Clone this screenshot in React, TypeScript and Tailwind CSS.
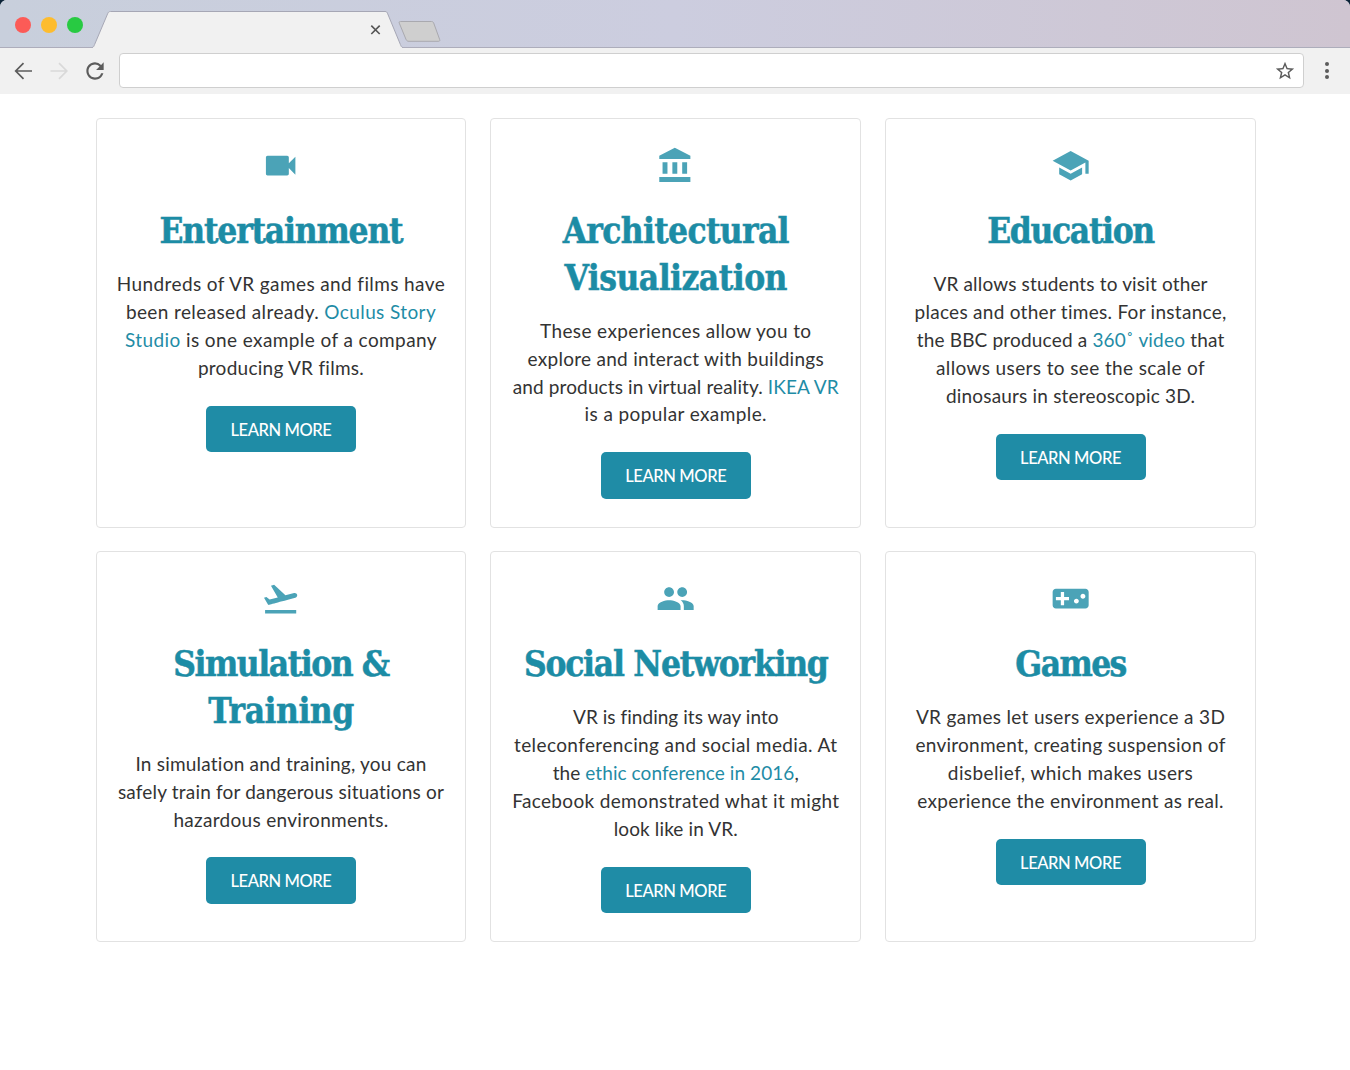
import { ReactNode } from "react";
import {
  MdFlightTakeoff,
  MdPeople,
  MdRefresh,
  MdSchool,
  MdStarBorder,
  MdVideocam,
  MdVideogameAsset,
} from "react-icons/md";

type Line = {
  content: ReactNode;
  tracking: string;
};

type Application = {
  id: string;
  icon: ReactNode;
  title: Line[];
  text: Line[];
};

const Link = ({ children }: { children: ReactNode }) => (
  <a href="#" className="text-[#1f8ca6]">
    {children}
  </a>
);

const BankIcon = () => (
  <svg viewBox="0 0 24 24" className="size-full" fill="currentColor">
    <path d="M4 10v7h3v-7H4zm6 0v7h3v-7h-3zM2 22h19v-3H2v3zm14-12v7h3v-7h-3zm-4.5-9L2 6v2h19V6l-9.5-5z" />
  </svg>
);

const applications: Application[] = [
  {
    id: "entertainment",
    icon: <MdVideocam className="size-full" />,
    title: [{ content: "Entertainment", tracking: "tracking-[-1.22px]" }],
    text: [
      { content: "Hundreds of VR games and films have", tracking: "tracking-[0.39px]" },
      {
        content: (
          <>
            been released already. <Link>Oculus Story</Link>
          </>
        ),
        tracking: "tracking-[0.39px]",
      },
      {
        content: (
          <>
            <Link>Studio</Link> is one example of a company
          </>
        ),
        tracking: "tracking-[0.41px]",
      },
      { content: "producing VR films.", tracking: "tracking-[0.26px]" },
    ],
  },
  {
    id: "architecture",
    icon: <BankIcon />,
    title: [
      { content: "Architectural", tracking: "tracking-[-0.69px]" },
      { content: "Visualization", tracking: "tracking-[-0.54px]" },
    ],
    text: [
      { content: "These experiences allow you to", tracking: "tracking-[0.37px]" },
      { content: "explore and interact with buildings", tracking: "tracking-[0.28px]" },
      {
        content: (
          <>
            and products in virtual reality. <Link>IKEA VR</Link>
          </>
        ),
        tracking: "tracking-[0.12px]",
      },
      { content: "is a popular example.", tracking: "tracking-[0.4px]" },
    ],
  },
  {
    id: "education",
    icon: <MdSchool className="size-full" />,
    title: [{ content: "Education", tracking: "tracking-[-1.36px]" }],
    text: [
      { content: "VR allows students to visit other", tracking: "tracking-[0.16px]" },
      { content: "places and other times. For instance,", tracking: "tracking-[0.28px]" },
      {
        content: (
          <>
            the BBC produced a <Link>360˚ video</Link> that
          </>
        ),
        tracking: "tracking-[0.18px]",
      },
      { content: "allows users to see the scale of", tracking: "tracking-[0.38px]" },
      { content: "dinosaurs in stereoscopic 3D.", tracking: "tracking-[0.19px]" },
    ],
  },
  {
    id: "simulation",
    icon: <MdFlightTakeoff className="size-full" />,
    title: [
      { content: "Simulation &", tracking: "tracking-[-1.46px]" },
      { content: "Training", tracking: "tracking-[-0.52px]" },
    ],
    text: [
      { content: "In simulation and training, you can", tracking: "tracking-[0.22px]" },
      { content: "safely train for dangerous situations or", tracking: "tracking-[0.19px]" },
      { content: "hazardous environments.", tracking: "tracking-[0.31px]" },
    ],
  },
  {
    id: "social",
    icon: <MdPeople className="size-full" />,
    title: [{ content: "Social Networking", tracking: "tracking-[-1.25px]" }],
    text: [
      { content: "VR is finding its way into", tracking: "tracking-[0.04px]" },
      { content: "teleconferencing and social media. At", tracking: "tracking-[0.39px]" },
      {
        content: (
          <>
            the <Link>ethic conference in 2016</Link>,
          </>
        ),
        tracking: "tracking-[0.07px]",
      },
      { content: "Facebook demonstrated what it might", tracking: "tracking-[0.34px]" },
      { content: "look like in VR.", tracking: "tracking-[0.12px]" },
    ],
  },
  {
    id: "games",
    icon: <MdVideogameAsset className="size-full" />,
    title: [{ content: "Games", tracking: "tracking-[-1.6px]" }],
    text: [
      { content: "VR games let users experience a 3D", tracking: "tracking-[0.32px]" },
      { content: "environment, creating suspension of", tracking: "tracking-[0.26px]" },
      { content: "disbelief, which makes users", tracking: "tracking-[0.41px]" },
      { content: "experience the environment as real.", tracking: "tracking-[0.29px]" },
    ],
  },
];

const BrowserBar = () => (
  <header className="overflow-hidden rounded-t-[7px] bg-[#f1f1f1]">
    {/* tab strip */}
    <div className="flex h-12 items-start bg-linear-to-r from-[#c8cfdc] via-[#cccddf] to-[#cfc5d1] shadow-[inset_0_-1px_0_#adadbb]">
      <div className="flex w-[92px] shrink-0 gap-[10px] pt-[17px] pl-[15px]">
        <span className="size-4 rounded-full bg-[#fc5b57]" />
        <span className="size-4 rounded-full bg-[#fdbc2e]" />
        <span className="size-4 rounded-full bg-[#28ca42]" />
      </div>
      <svg width="352" height="48" viewBox="0 0 352 48" className="shrink-0">
        <path
          d="M0 48.5V47.5C1.5 47.5 2 46 2.6 44.5L15.6 13.8C16.4 12 17 11.5 18.5 11.5H293C294.5 11.5 295 12 295.7 13.8L308.4 44.5C309 46 309.5 47.5 311 47.5V48.5Z"
          fill="#f1f1f1"
        />
        <path
          d="M0 47.5C1.5 47.5 2 46 2.6 44.5L15.6 13.8C16.4 12 17 11.5 18.5 11.5H293C294.5 11.5 295 12 295.7 13.8L308.4 44.5C309 46 309.5 47.5 311 47.5"
          fill="none"
          stroke="#a6a7b5"
        />
        <path d="M279.3 25.6l8.4 8.4M287.7 25.6l-8.4 8.4" stroke="#555" strokeWidth="1.6" />
        <path
          d="M308.5 21.5H339.5C340.7 21.5 341.2 22 341.7 23L347.6 39.3C348 40.7 347.7 41.3 346.7 41.3H317C315.5 41.3 314.7 40.8 314 39.4L307.3 23.2C306.9 22 307.3 21.5 308.5 21.5Z"
          fill="#cfcfcf"
          stroke="#a9a9af"
        />
      </svg>
    </div>

    {/* toolbar */}
    <div className="flex h-[46px] items-center pb-px pl-[14px] text-[#5c5c5c]">
      <svg width="18" height="18" viewBox="0 0 18 18" fill="none" stroke="currentColor" strokeWidth="1.7">
        <path d="M18 9H2M9.5 1.2L1.7 9l7.8 7.8" />
      </svg>
      <svg
        width="18"
        height="18"
        viewBox="0 0 18 18"
        fill="none"
        stroke="#d9d9d9"
        strokeWidth="1.7"
        className="ml-[18px]"
      >
        <path d="M0.5 9H16.5M9 1.2L16.8 9L9 16.8" />
      </svg>
      <MdRefresh className="ml-[14px] size-[26px]" />
      <div className="ml-[11px] flex h-[35px] w-[1185px] items-center justify-end rounded-[4px] border border-[#cfcfcf] bg-white pr-[7px]">
        <MdStarBorder className="size-[22px]" />
      </div>
      <div className="ml-[21px] flex flex-col gap-[2.5px]">
        <span className="size-1 rounded-full bg-[#5c5c5c]" />
        <span className="size-1 rounded-full bg-[#5c5c5c]" />
        <span className="size-1 rounded-full bg-[#5c5c5c]" />
      </div>
    </div>
  </header>
);

const ApplicationCard = ({ icon, title, text }: Application) => (
  <article className="flex flex-col items-center rounded-[4px] border border-[#e2e2e2] pt-[27px] text-center whitespace-nowrap">
    <div className="size-[39.3px] text-[#4ba3b7]">{icon}</div>
    <h2 className="mt-[22.7px] font-['DejaVu_Serif_Condensed','DejaVu_Serif',serif] text-[35px] leading-[46.6px] font-bold text-[#1c8ca5] [-webkit-text-stroke:0.5px_#1c8ca5]">
      {title.map((line, i) => (
        <span key={i} className={`block ${line.tracking}`}>
          {line.content}
        </span>
      ))}
    </h2>
    <p className="mt-[15.6px] font-['Lato',sans-serif] text-[19px] leading-[27.9px] text-[#333]">
      {text.map((line, i) => (
        <span key={i} className={`block ${line.tracking}`}>
          {line.content}
        </span>
      ))}
    </p>
    <button className="mt-6 h-[46.5px] w-[150px] shrink-0 rounded-[5px] bg-[#1f8ca6] pt-[2px] font-['Lato',sans-serif] text-[16.5px] font-medium tracking-[-0.4px] text-white">
      LEARN MORE
    </button>
  </article>
);

const App = () => {
  return (
    <div className="h-[1070px] w-[1350px] overflow-hidden bg-white">
      <div className="bg-[#0b2338]">
        <BrowserBar />
      </div>
      <main className="grid grid-cols-[370.6px_370.6px_370.6px] grid-rows-[410px_391px] gap-x-[24.2px] gap-y-[23px] pt-6 pl-[95.7px]">
        {applications.map((application) => (
          <ApplicationCard key={application.id} {...application} />
        ))}
      </main>
    </div>
  );
};

export default App;
